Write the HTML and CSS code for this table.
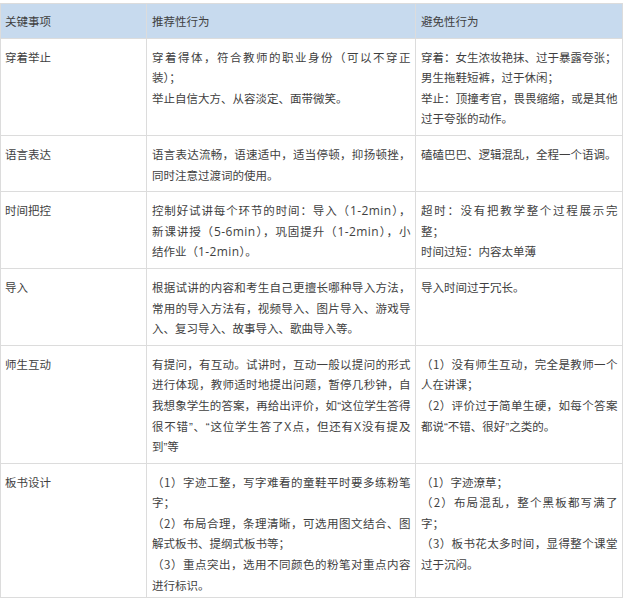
FILE: index.html
```html
<!DOCTYPE html>
<html lang="zh-CN">
<head>
<meta charset="utf-8">
<title>试讲要点</title>
<link rel="stylesheet" href="styles.css">
</head>
<body>
<table class="grid">
  <colgroup>
    <col class="col-key">
    <col class="col-do">
    <col class="col-dont">
  </colgroup>
  <thead>
    <tr>
      <th>关键事项</th>
      <th>推荐性行为</th>
      <th>避免性行为</th>
    </tr>
  </thead>
  <tbody>
    <tr>
      <td>穿着举止</td>
      <td>穿着得体，符合教师的职业身份（可以不穿正装）；<br>举止自信大方、从容淡定、面带微笑。</td>
      <td>穿着：女生浓妆艳抹、过于暴露夸张；<br>男生拖鞋短裤，过于休闲；<br>举止：顶撞考官，畏畏缩缩，或是其他过于夸张的动作。</td>
    </tr>
    <tr>
      <td>语言表达</td>
      <td>语言表达流畅，语速适中，适当停顿，抑扬顿挫，同时注意过渡词的使用。</td>
      <td>磕磕巴巴、逻辑混乱，全程一个语调。</td>
    </tr>
    <tr>
      <td>时间把控</td>
      <td><span class="fill">控制好试讲每个环节的时间：导入（<span class="en">1-2min</span>），</span><span class="fill">新课讲授（<span class="en">5-6min</span>），巩固提升（<span class="en">1-2min</span>），小</span>结作业（<span class="en">1-2min</span>）。</td>
      <td><span class="fill">超时：没有把教学整个过程展示完</span>整；<br>时间过短：内容太单薄</td>
    </tr>
    <tr>
      <td>导入</td>
      <td>根据试讲的内容和考生自己更擅长哪种导入方法，常用的导入方法有，视频导入、图片导入、游戏导入、复习导入、故事导入、歌曲导入等。</td>
      <td>导入时间过于冗长。</td>
    </tr>
    <tr>
      <td>师生互动</td>
      <td><span class="fill">有提问，有互动。试讲时，互动一般以提问的形式</span><span class="fill">进行体现，教师适时地提出问题，暂停几秒钟，自</span><span class="fill">我想象学生的答案，再给出评价，如<span class="q">“</span>这位学生答得</span><span class="fill">很不错<span class="q">”</span>、<span class="q">“</span>这位学生答了<span class="en">X</span>点，但还有<span class="en">X</span>没有提及</span>到<span class="q">”</span>等</td>
      <td><span class="fill">（1）没有师生互动，完全是教师一个</span>人在讲课；<span class="fill">（2）评价过于简单生硬，如每个答案</span>都说<span class="q">“</span>不错、很好<span class="q">”</span>之类的。</td>
    </tr>
    <tr class="last">
      <td>板书设计</td>
      <td>（1）字迹工整，写字难看的童鞋平时要多练粉笔字；<br>（2）布局合理，条理清晰，可选用图文结合、图解式板书、提纲式板书等；<br>（3）重点突出，选用不同颜色的粉笔对重点内容进行标识。</td>
      <td>（1）字迹潦草；<br>（2）布局混乱，整个黑板都写满了字；<br>（3）板书花太多时间，显得整个课堂过于沉闷。</td>
    </tr>
  </tbody>
</table>
</body>
</html>
```

FILE: styles.css
```css
html, body {
  margin: 0;
  padding: 0;
  background: #ffffff;
}

body {
  padding-top: 3px;
  font-family: "Noto Sans CJK SC", sans-serif;
  font-size: 11.5px;
  line-height: 20.6px;
  color: #3f3f3f;
}

.grid {
  border-collapse: collapse;
  table-layout: fixed;
  width: 622px;
}

.col-key { width: 146px; }
.col-do { width: 269px; }
.col-dont { width: 207px; }

.grid th,
.grid td {
  border: 1px solid #dcdcdc;
  padding: 7px 4.6px 6px 5px;
  vertical-align: top;
  text-align: justify;
}

.grid th {
  background: #c7daee;
  font-weight: normal;
  text-align: left;
  padding-top: 7px;
  padding-bottom: 6px;
}

.grid td {
  padding-top: 8px;
  padding-bottom: 6px;
}

.grid th:first-child,
.grid td:first-child {
  padding-left: 4px;
}

.grid tr.last td {
  padding-bottom: 2px;
}

.fill {
  display: block;
  text-align: justify;
  text-align-last: justify;
}

.en {
  font-family: "Open Sans", "Liberation Sans", sans-serif;
  font-size: 12px;
  letter-spacing: 0.4px;
  line-height: 1;
}

.q {
  font-family: "Liberation Sans", "Open Sans", sans-serif;
  line-height: 1;
}
```
